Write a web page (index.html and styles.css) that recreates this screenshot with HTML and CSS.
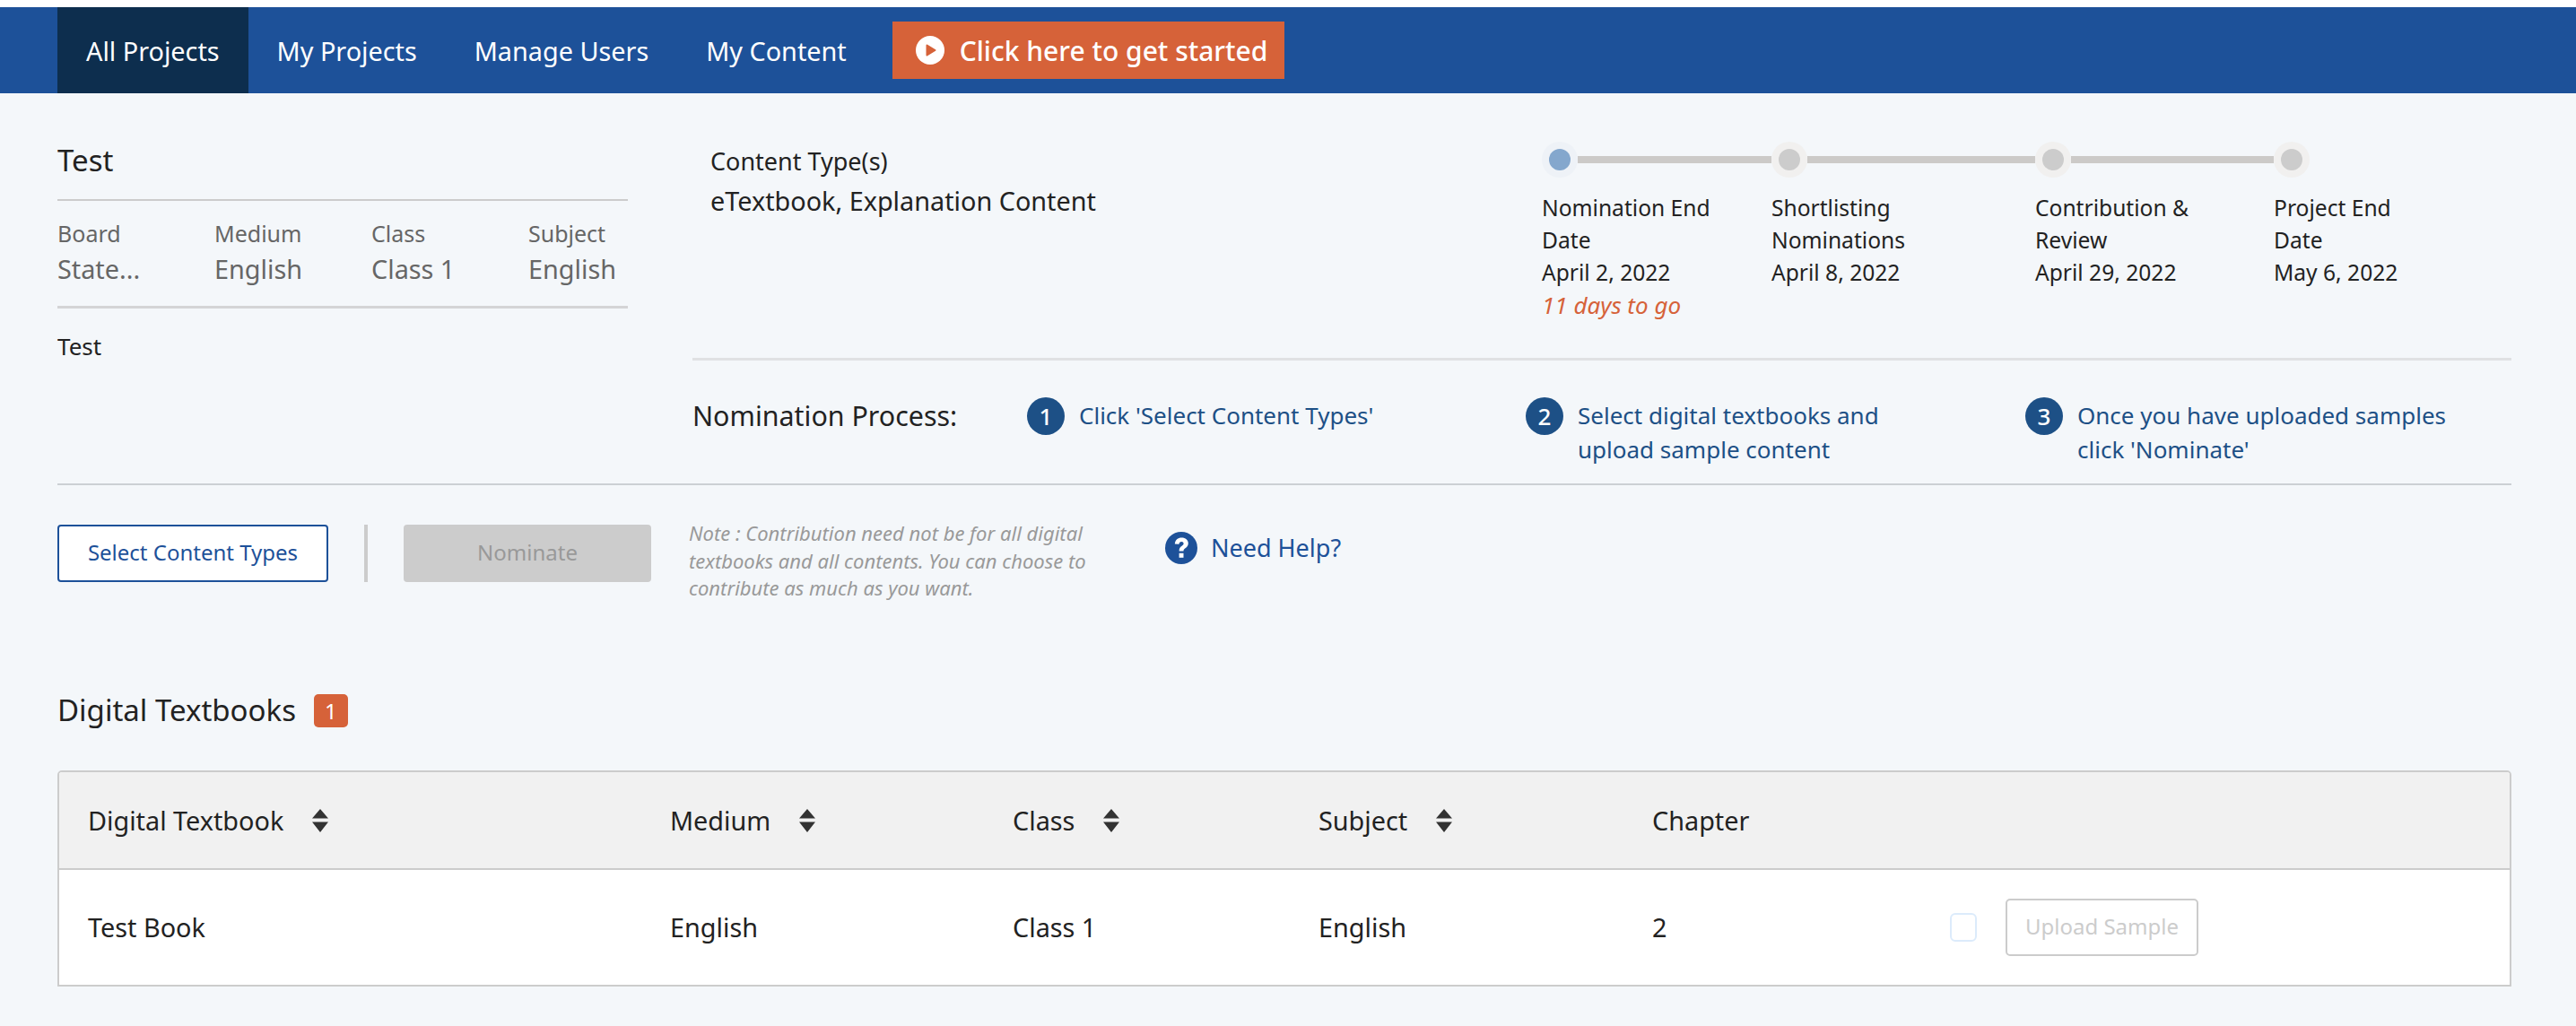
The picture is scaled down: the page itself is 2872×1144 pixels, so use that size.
FILE: index.html
```html
<!DOCTYPE html>
<html lang="en">
<head>
<meta charset="utf-8">
<title>All Projects</title>
<link rel="stylesheet" href="styles.css">
</head>
<body>
<nav class="nav">
  <a class="nav-item active">All Projects</a>
  <a class="nav-item">My Projects</a>
  <a class="nav-item">Manage Users</a>
  <a class="nav-item">My Content</a>
  <a class="start">
    <svg class="start-icon" viewBox="0 0 32 32"><circle cx="16" cy="16" r="16" fill="#fff"/><path d="M12.500 10.500 21.500 16 12.500 21.500Z" fill="#d66239" stroke="#d66239" stroke-width="2" stroke-linejoin="round"/></svg>
    Click here to get started
  </a>
</nav>
<main class="main">
  <section class="top">
    <div class="info">
      <h1 class="title">Test</h1>
      <div class="meta">
        <div class="meta-col"><span class="meta-label">Board</span><span class="meta-value">State...</span></div>
        <div class="meta-col"><span class="meta-label">Medium</span><span class="meta-value">English</span></div>
        <div class="meta-col"><span class="meta-label">Class</span><span class="meta-value">Class 1</span></div>
        <div class="meta-col"><span class="meta-label">Subject</span><span class="meta-value">English</span></div>
      </div>
      <p class="desc">Test</p>
    </div>
    <div class="side">
      <div class="summary">
        <div class="types">
          <div class="types-label">Content Type(s)</div>
          <div class="types-value">eTextbook, Explanation Content</div>
        </div>
        <div class="timeline">
          <div class="stage s1">
            <div class="track"><span class="dot current"></span><span class="bar"></span></div>
            <div class="stage-text">Nomination End<br>Date<br>April 2, 2022<br><em class="left">11 days to go</em></div>
          </div>
          <div class="stage s2">
            <div class="track"><span class="dot"></span><span class="bar"></span></div>
            <div class="stage-text">Shortlisting<br>Nominations<br>April 8, 2022</div>
          </div>
          <div class="stage s3">
            <div class="track"><span class="dot"></span><span class="bar"></span></div>
            <div class="stage-text">Contribution &amp;<br>Review<br>April 29, 2022</div>
          </div>
          <div class="stage s4">
            <div class="track"><span class="dot"></span></div>
            <div class="stage-text">Project End<br>Date<br>May 6, 2022</div>
          </div>
        </div>
      </div>
      <div class="process">
        <div class="process-label">Nomination Process:</div>
        <div class="step st1"><span class="num">1</span><span class="step-text">Click 'Select Content Types'</span></div>
        <div class="step st2"><span class="num">2</span><span class="step-text">Select digital textbooks and<br>upload sample content</span></div>
        <div class="step st3"><span class="num">3</span><span class="step-text">Once you have uploaded samples<br>click 'Nominate'</span></div>
      </div>
    </div>
  </section>
  <section class="actions">
    <button class="btn btn-outline">Select Content Types</button>
    <span class="vline"></span>
    <button class="btn btn-disabled">Nominate</button>
    <p class="note">Note : Contribution need not be for all digital<br>textbooks and all contents. You can choose to<br>contribute as much as you want.</p>
    <a class="help">
      <svg class="help-icon" viewBox="0 0 36 36"><circle cx="18" cy="18" r="18" fill="#1d5199"/><path d="M10.800 13.400C11.200 8.800 14.300 6.400 18.400 6.400c4.300 0 7.400 2.600 7.400 6.400 0 2.700-1.400 4.200-3.300 5.500-1.500 1-2 1.700-2 3.200h-4.900c0-3 1-4.400 3-5.700 1.300-.9 2-1.600 2-2.700 0-1.300-1-2.200-2.400-2.200-1.500 0-2.500 1-2.700 2.800Z" fill="#fff"/><rect x="15.600" y="23.800" width="4.900" height="5" fill="#fff"/></svg>
      Need Help?
    </a>
  </section>
  <h2 class="section-title">Digital Textbooks <span class="badge">1</span></h2>
  <div class="table">
    <div class="row head">
      <div class="cell c1">Digital Textbook <svg class="sort" viewBox="0 0 18 26"><path d="M9 0 18 10.500H0Z M0 14.500H18L9 26Z"/></svg></div>
      <div class="cell c2">Medium <svg class="sort" viewBox="0 0 18 26"><path d="M9 0 18 10.500H0Z M0 14.500H18L9 26Z"/></svg></div>
      <div class="cell c3">Class <svg class="sort" viewBox="0 0 18 26"><path d="M9 0 18 10.500H0Z M0 14.500H18L9 26Z"/></svg></div>
      <div class="cell c4">Subject <svg class="sort" viewBox="0 0 18 26"><path d="M9 0 18 10.500H0Z M0 14.500H18L9 26Z"/></svg></div>
      <div class="cell c5">Chapter</div>
    </div>
    <div class="row body">
      <div class="cell c1">Test Book</div>
      <div class="cell c2">English</div>
      <div class="cell c3">Class 1</div>
      <div class="cell c4">English</div>
      <div class="cell c5">2</div>
      <div class="cell c6"><span class="check"></span><button class="upload">Upload Sample</button></div>
    </div>
  </div>
</main>
</body>
</html>
```
FILE: styles.css
```css
* { box-sizing: border-box; }
html, body { margin: 0; padding: 0; }
body {
  background: #f4f7fa;
  font-family: "Noto Sans", "Open Sans", sans-serif;
  color: #222;
  padding-top: 8px;
  height: 1144px;
  overflow: hidden;
}
body::before { content: ""; position: absolute; inset: 0 0 auto 0; height: 8px; background: #fff; }

.nav {
  height: 96px;
  background: #1d5199;
  display: flex;
  align-items: center;
  padding-left: 64px;
  color: #fff;
  font-size: 28.8px;
}
.nav-item { height: 96px; display: flex; align-items: center; padding: 0 32px; }
.nav-item.active { background: #0d2e4e; }
.start {
  display: flex;
  align-items: center;
  gap: 17px;
  height: 64px;
  width: 437px;
  margin-left: 19px;
  padding-left: 26px;
  background: #d66239;
  font-size: 30px;
  font-weight: 500;
}
.start-icon { width: 32px; height: 32px; }

.main { padding: 0 72px 0 64px; }
.top { display: flex; height: 435px; }

.info { width: 636px; flex: none; padding-top: 53px; }
.title { margin: 0; font-size: 33px; font-weight: 400; line-height: 44px; height: 65px; }
.meta {
  display: grid;
  grid-template-columns: repeat(4, 175px);
  border-top: 2px solid #ccc;
  border-bottom: 3px solid #d4d4d6;
  height: 122px;
  padding-top: 19px;
}
.meta-col { display: flex; flex-direction: column; }
.meta-label { font-size: 25px; line-height: 35px; color: #666; }
.meta-value { font-size: 28.800px; line-height: 44px; color: #666; }
.desc { margin: 24px 0 0; font-size: 26px; line-height: 36px; }

.side { margin-left: 72px; flex: 1; display: flex; flex-direction: column; }
.summary { display: flex; height: 298px; border-bottom: 3px solid #e0e1e3; }
.types { width: 947px; flex: none; padding: 58px 0 0 20px; }
.types-label { font-size: 27px; line-height: 36px; }
.types-value { font-size: 28.800px; line-height: 44px; margin-top: 4px; }

.timeline { display: flex; padding-top: 54px; }
.stage { flex: none; }
.s1 { width: 256px; }
.s2 { width: 294px; }
.s3 { width: 266px; }
.s4 { width: 200px; }
.track { display: flex; align-items: center; height: 40px; }
.dot {
  flex: none;
  width: 40px;
  height: 40px;
  border-radius: 50%;
  background: #f1f0ef;
  position: relative;
}
.dot::after {
  content: "";
  position: absolute;
  left: 8px;
  top: 8px;
  width: 24px;
  height: 24px;
  border-radius: 50%;
  background: #ccc;
}
.dot.current { background: #eef2f7; }
.dot.current::after { background: #84a7cd; }
.bar { height: 8px; background: #cccac8; flex: 1; }
.stage-text { font-size: 24.600px; line-height: 36px; margin-top: 16px; color: #222; white-space: nowrap; }
.left { color: #d66239; font-style: italic; font-size: 26px; }

.process { display: flex; height: 137px; align-items: flex-start; padding-top: 41px; }
.process-label { font-size: 30.400px; line-height: 42px; width: 373px; flex: none; }
.step { display: flex; gap: 16px; flex: none; color: #1d5086; font-size: 26px; line-height: 38px; }
.st1 { width: 556px; }
.st2 { width: 557px; }
.num {
  flex: none;
  width: 42px;
  height: 42px;
  border-radius: 50%;
  background: #1d5086;
  color: #fff;
  font-size: 26px;
  line-height: 42px;
  text-align: center;
  font-weight: 500;
}
.step-text { padding-top: 1px; white-space: nowrap; }

.actions { display: flex; border-top: 2px solid #ccd0d4; height: 231px; padding-top: 44px; align-items: flex-start; }
.btn { height: 64px; font: inherit; font-size: 24px; border-radius: 4px; padding: 0 0 3px; }
.btn-outline { width: 302px; background: #fff; color: #1d5199; border: 2px solid #1d5199; }
.vline { width: 4px; height: 64px; background: #ccc; margin: 0 40px; }
.btn-disabled { width: 276px; background: #ccc; color: #999; border: 0; }
.note { margin: -6px 0 0 42px; width: 520px; flex: none; font-size: 22px; line-height: 30.500px; font-style: italic; color: #999; white-space: nowrap; }
.help { display: flex; align-items: center; gap: 15px; margin: 8px 0 0 11px; color: #1d5199; font-size: 27px; line-height: 36px; }
.help-icon { width: 36px; height: 36px; }

.section-title { margin: 0; height: 89px; display: flex; align-items: flex-start; gap: 20px; font-size: 33px; font-weight: 400; line-height: 44px; }
.badge { width: 38px; height: 37px; margin-top: 4px; background: #d66239; color: #fff; border-radius: 5px; font-size: 24px; line-height: 37px; text-align: center; }

.table { width: 2736px; border: 2px solid #ccc; border-radius: 5px 5px 0 0; overflow: hidden; background: #fff; }
.row { display: grid; grid-template-columns: 649px 382px 341px 372px 1fr; align-items: center; font-size: 28.800px; padding-left: 32px; }
.head { height: 109px; background: #f1f1f1; border-bottom: 2px solid #ccc; }
.body { height: 128px; grid-template-columns: 649px 382px 341px 372px 332px 1fr; padding-bottom: 1px; }
.cell { display: flex; align-items: center; gap: 32px; }
.sort { width: 18px; height: 26px; fill: #333; }
.check { width: 30px; height: 32px; border: 2px solid #dcebfb; border-radius: 6px; background: #fff; }
.upload { width: 215px; height: 64px; background: #fff; border: 2px solid #ccc; border-radius: 5px; color: #ccc; font: inherit; font-size: 24px; padding: 0 0 3px; }
```
